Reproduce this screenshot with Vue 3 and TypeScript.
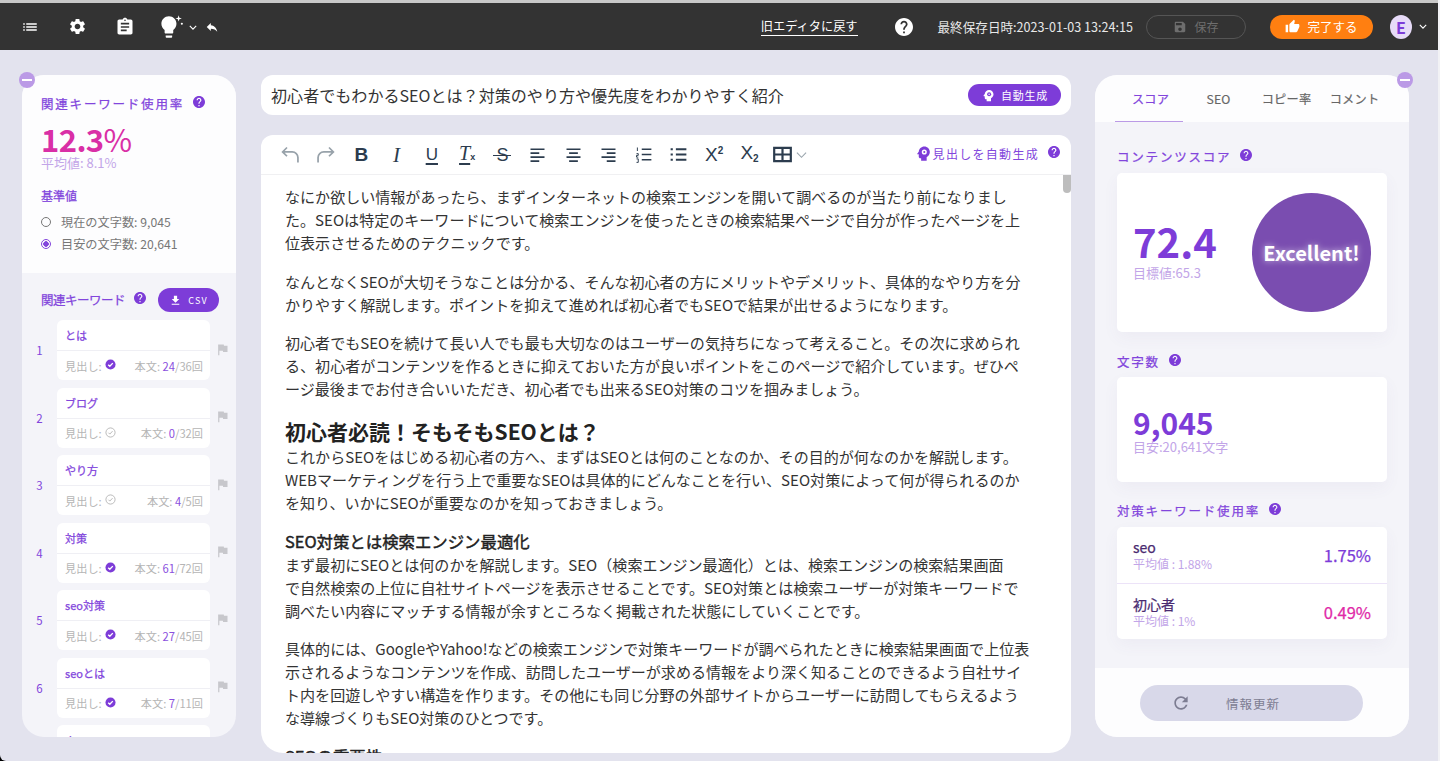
<script setup lang="ts">
const P = {
  list: 'M3 13h2v-2H3v2zm0 4h2v-2H3v2zm0-8h2V7H3v2zm4 4h14v-2H7v2zm0 4h14v-2H7v2zM7 7v2h14V7H7z',
  gear: 'M19.14 12.94c.04-.3.06-.61.06-.94 0-.32-.02-.64-.07-.94l2.03-1.58c.18-.14.23-.41.12-.61l-1.92-3.32c-.12-.22-.37-.29-.59-.22l-2.39.96c-.5-.38-1.03-.7-1.62-.94l-.36-2.54c-.04-.24-.24-.41-.48-.41h-3.84c-.24 0-.43.17-.47.41l-.36 2.54c-.59.24-1.13.57-1.62.94l-2.39-.96c-.22-.08-.47 0-.59.22L2.74 8.87c-.12.21-.08.47.12.61l2.03 1.58c-.05.3-.09.63-.09.94s.02.64.07.94l-2.03 1.58c-.18.14-.23.41-.12.61l1.92 3.32c.12.22.37.29.59.22l2.39-.96c.5.38 1.03.7 1.62.94l.36 2.54c.05.24.24.41.48.41h3.84c.24 0 .44-.17.47-.41l.36-2.54c.59-.24 1.13-.56 1.62-.94l2.39.96c.22.08.47 0 .59-.22l1.92-3.32c.12-.22.07-.47-.12-.61l-2.01-1.58zM12 15.6c-1.98 0-3.6-1.62-3.6-3.6s1.62-3.6 3.6-3.6 3.6 1.62 3.6 3.6-1.62 3.6-3.6 3.6z',
  clip: 'M19 3h-4.18C14.4 1.84 13.3 1 12 1c-1.3 0-2.4.84-2.82 2H5c-1.1 0-2 .9-2 2v14c0 1.1.9 2 2 2h14c1.1 0 2-.9 2-2V5c0-1.1-.9-2-2-2zm-7 0c.55 0 1 .45 1 1s-.45 1-1 1-1-.45-1-1 .45-1 1-1zm2 14H7v-2h7v2zm3-4H7v-2h10v2zm0-4H7V7h10v2z',
  bulb: 'M9 21c0 .55.45 1 1 1h4c.55 0 1-.45 1-1v-1H9v1zm3-19C8.14 2 5 5.14 5 9c0 2.38 1.19 4.47 3 5.74V17c0 .55.45 1 1 1h6c.55 0 1-.45 1-1v-2.26c1.81-1.27 3-3.36 3-5.74 0-3.86-3.14-7-7-7z',
  reply: 'M10 9V5l-7 7 7 7v-4.1c5 0 8.5 1.6 11 5.1-1-5-4-10-11-11z',
  help: 'M12 2C6.48 2 2 6.48 2 12s4.48 10 10 10 10-4.48 10-10S17.52 2 12 2zm1 17h-2v-2h2v2zm2.07-7.75l-.9.92C13.45 12.9 13 13.5 13 15h-2v-.5c0-1.1.45-2.1 1.17-2.83l1.24-1.26c.37-.36.59-.86.59-1.41 0-1.1-.9-2-2-2s-2 .9-2 2H8c0-2.21 1.79-4 4-4s4 1.79 4 4c0 .88-.36 1.68-.93 2.25z',
  save: 'M17 3H5c-1.11 0-2 .9-2 2v14c0 1.1.89 2 2 2h14c1.1 0 2-.9 2-2V7l-4-4zm-5 16c-1.66 0-3-1.34-3-3s1.34-3 3-3 3 1.34 3 3-1.34 3-3 3zm3-10H5V5h10v4z',
  thumb: 'M1 21h4V9H1v12zm22-11c0-1.1-.9-2-2-2h-6.31l.95-4.57.03-.32c0-.41-.17-.79-.44-1.06L14.17 1 7.59 7.59C7.22 7.95 7 8.45 7 9v10c0 1.1.9 2 2 2h9c.83 0 1.54-.5 1.84-1.22l3.02-7.05c.09-.23.14-.47.14-.73v-2z',
  down: 'M19 9h-4V3H9v6H5l7 7 7-7zM5 18v2h14v-2H5z',
  flag: 'M14.4 6L14 4H5v17h2v-7h5.6l.4 2h7V6z',
  refresh: 'M17.65 6.35C16.2 4.9 14.21 4 12 4c-4.42 0-7.99 3.58-7.99 8s3.57 8 7.99 8c3.73 0 6.84-2.55 7.73-6h-2.08c-.82 2.33-3.04 4-5.65 4-3.31 0-6-2.69-6-6s2.69-6 6-6c1.66 0 3.14.69 4.22 1.78L13 11h7V4l-2.35 2.35z',
  head: 'M13 3C9.23 3 6.19 5.95 6 9.66l-1.92 2.53c-.24.31 0 .81.42.81H6v3c0 1.1.9 2 2 2h1v3h7v-4.68c2.36-1.12 4-3.53 4-6.32 0-3.87-3.13-7-7-7z',
}

interface Keyword { name: string; done: boolean; hit: number; max: number }
const keywords: Keyword[] = [
  { name: 'とは', done: true, hit: 24, max: 36 },
  { name: 'ブログ', done: false, hit: 0, max: 32 },
  { name: 'やり方', done: false, hit: 4, max: 5 },
  { name: '対策', done: true, hit: 61, max: 72 },
  { name: 'seo対策', done: true, hit: 27, max: 45 },
  { name: 'seoとは', done: true, hit: 7, max: 11 },
  { name: '人', done: true, hit: 3, max: 9 },
]
const tabs = ['スコア', 'SEO', 'コピー率', 'コメント']
</script>

<template>
  <div class="app">
    <header class="topbar">
      <div class="tools">
        <svg class="ti t1" viewBox="0 0 24 24"><path :d="P.list" /></svg>
        <svg class="ti t2" viewBox="0 0 24 24"><path :d="P.gear" /></svg>
        <svg class="ti t3" viewBox="0 0 24 24"><path :d="P.clip" /></svg>
        <svg class="bulb" viewBox="0 0 26 24">
          <path :d="P.bulb" />
          <path d="M21 1l.7 2.3L24 4l-2.3.7L21 7l-.7-2.3L18 4l2.3-.7z" />
          <circle cx="24" cy="9" r="1" />
        </svg>
        <svg class="chev" viewBox="0 0 10 6"><path d="M1 1l4 4 4-4" /></svg>
        <svg class="reply" viewBox="0 0 24 24"><path :d="P.reply" /></svg>
      </div>
      <div class="status">
        <a class="legacy">旧エディタに戻す</a>
        <svg class="qhelp" viewBox="2 2 20 20"><path :d="P.help" /></svg>
        <span class="saved">最終保存日時:2023-01-03 13:24:15</span>
        <button class="savebtn">
          <svg viewBox="0 0 24 24"><path :d="P.save" /></svg>保存
        </button>
        <button class="donebtn">
          <svg viewBox="0 0 24 24"><path :d="P.thumb" /></svg>完了する
        </button>
        <span class="avatar">E</span>
        <svg class="chev" viewBox="0 0 10 6"><path d="M1 1l4 4 4-4" /></svg>
      </div>
    </header>

    <main class="stage">
      <aside class="left panel">
        <span class="minus minus-l"></span>
        <section class="usage">
          <h3 class="h wide">関連キーワード使用率<svg class="hi" viewBox="2 2 20 20"><path :d="P.help" /></svg></h3>
          <div class="rate">12.3<span>%</span></div>
          <div class="avg">平均値: 8.1%</div>
          <h4 class="base">基準値</h4>
          <label class="radio"><i></i>現在の文字数: 9,045</label>
          <label class="radio on"><i></i>目安の文字数: 20,641</label>
        </section>
        <section class="kw">
          <div class="kwhead">
            <h3 class="h">関連キーワード</h3>
            <svg class="hi" viewBox="2 2 20 20"><path :d="P.help" /></svg>
            <button class="csv"><svg viewBox="0 0 24 24"><path :d="P.down" /></svg>CSV</button>
          </div>
          <div v-for="(k, i) in keywords" :key="k.name" class="kwrow">
            <span class="num">{{ i + 1 }}</span>
            <div class="kwcard">
              <div class="kwname">{{ k.name }}</div>
              <div class="kwmeta">
                <span class="mh">見出し:
                  <svg v-if="k.done" viewBox="0 0 24 24"><circle cx="12" cy="12" r="11" fill="#7d3cd8" /><path d="M7 12.5l3.5 3.5L17 9" fill="none" stroke="#fff" stroke-width="3" /></svg>
                  <svg v-else viewBox="0 0 24 24"><circle cx="12" cy="12" r="10" fill="none" stroke="#b5b5b5" stroke-width="2" /><path d="M7.5 12.5l3 3L16.5 9" fill="none" stroke="#b5b5b5" stroke-width="2" /></svg>
                </span>
                <span class="mb">本文: <b>{{ k.hit }}</b>/{{ k.max }}回</span>
              </div>
            </div>
            <svg class="flag" viewBox="0 0 24 24"><path :d="P.flag" /></svg>
          </div>
        </section>
      </aside>

      <div class="center">
        <div class="titlecard">
          <span class="title">初心者でもわかるSEOとは？対策のやり方や優先度をわかりやすく紹介</span>
          <button class="auto">
            <svg viewBox="0 0 24 24"><path :d="P.head" /><circle cx="13" cy="10" r="3.2" fill="#7d3cd8" /><circle cx="13" cy="10" r="1.2" /></svg>自動生成
          </button>
        </div>
        <div class="editor">
          <div class="toolbar">
            <div class="tb mute">
              <svg viewBox="0 0 24 24"><path d="M8 4L3 9l5 5M3.500 9H14a6.500 6.500 0 0 1 6.500 6.500V21" /></svg>
            </div>
            <div class="tb mute">
              <svg viewBox="0 0 24 24"><path d="M16 4l5 5-5 5M20.500 9H10a6.500 6.500 0 0 0-6.500 6.500V21" /></svg>
            </div>
            <div class="tb"><span class="g gb">B</span></div>
            <div class="tb"><span class="g gi">I</span></div>
            <div class="tb"><span class="g gu">U</span></div>
            <div class="tb"><span class="g gt"><u>T</u><small>x</small></span></div>
            <div class="tb"><span class="g gs">S</span></div>
            <div class="tb"><svg viewBox="0 0 24 24"><path d="M4 6h16M4 10.500h10M4 15h16M4 19.500h10" /></svg></div>
            <div class="tb"><svg viewBox="0 0 24 24"><path d="M4 6h16M7 10.500h10M4 15h16M7 19.500h10" /></svg></div>
            <div class="tb"><svg viewBox="0 0 24 24"><path d="M4 6h16M10 10.500h10M4 15h16M10 19.500h10" /></svg></div>
            <div class="tb"><svg viewBox="0 0 24 24"><path d="M10 6h11M10 12h11M10 18h11" /><path d="M5 4v4M4 11h2v2H4v2h2M4 17h2v4H4" stroke-width="1.100" /></svg></div>
            <div class="tb"><svg viewBox="0 0 24 24"><path d="M9 6h12M9 12h12M9 18h12M3 6h2.500M3 12h2.500M3 18h2.500" stroke-width="2.200" /></svg></div>
            <div class="tb"><span class="g gx">X<sup>2</sup></span></div>
            <div class="tb"><span class="g gx gsub">X<sub>2</sub></span></div>
            <div class="tb table">
              <svg viewBox="0 0 24 24"><path d="M2.500 4.500h19v15h-19zM2.500 12h19M12 4.500v15" stroke-width="2.500" /></svg>
              <svg class="tchev" viewBox="0 0 12 8"><path d="M1 1.500l5 5 5-5" /></svg>
            </div>
            <div class="gen">
              <svg viewBox="0 0 24 24"><path :d="P.head" /><circle cx="13" cy="10" r="3.200" fill="#fff" /><circle cx="13" cy="10" r="1.300" /></svg>
              <span>見出しを自動生成</span>
              <svg class="hi" viewBox="2 2 20 20"><path :d="P.help" /></svg>
            </div>
          </div>
          <div class="doc">
            <i class="thumb"></i>
            <p>なにか欲しい情報があったら、まずインターネットの検索エンジンを開いて調べるのが当たり前になりました。SEOは特定のキーワードについて検索エンジンを使ったときの検索結果ページで自分が作ったページを上位表示させるためのテクニックです。</p>
            <p>なんとなくSEOが大切そうなことは分かる、そんな初心者の方にメリットやデメリット、具体的なやり方を分かりやすく解説します。ポイントを抑えて進めれば初心者でもSEOで結果が出せるようになります。</p>
            <p>初心者でもSEOを続けて長い人でも最も大切なのはユーザーの気持ちになって考えること。その次に求められる、初心者がコンテンツを作るときに抑えておいた方が良いポイントをこのページで紹介しています。ぜひページ最後までお付き合いいただき、初心者でも出来るSEO対策のコツを掴みましょう。</p>
            <h2>初心者必読！そもそもSEOとは？</h2>
            <p>これからSEOをはじめる初心者の方へ、まずはSEOとは何のことなのか、その目的が何なのかを解説します。WEBマーケティングを行う上で重要なSEOは具体的にどんなことを行い、SEO対策によって何が得られるのかを知り、いかにSEOが重要なのかを知っておきましょう。</p>
            <h5>SEO対策とは検索エンジン最適化</h5>
            <p>まず最初にSEOとは何のかを解説します。SEO（検索エンジン最適化）とは、検索エンジンの検索結果画面<br />で自然検索の上位に自社サイトページを表示させることです。SEO対策とは検索ユーザーが対策キーワードで調べたい内容にマッチする情報が余すところなく掲載された状態にしていくことです。</p>
            <p>具体的には、GoogleやYahoo!などの検索エンジンで対策キーワードが調べられたときに検索結果画面で上位表示されるようなコンテンツを作成、訪問したユーザーが求める情報をより深く知ることのできるよう自社サイト内を回遊しやすい構造を作ります。その他にも同じ分野の外部サイトからユーザーに訪問してもらえるような導線づくりもSEO対策のひとつです。</p>
            <h5>SEOの重要性</h5>
          </div>
        </div>
      </div>

      <aside class="right panel">
        <span class="minus minus-r"></span>
        <nav class="tabs">
          <span v-for="(t, i) in tabs" :key="t" class="tab" :class="{ active: i === 0 }">{{ t }}</span>
        </nav>
        <section class="scores">
          <h3 class="h wide">コンテンツスコア<svg class="hi" viewBox="2 2 20 20"><path :d="P.help" /></svg></h3>
          <div class="card scorecard">
            <div class="scorebox">
              <div class="big">72.4</div>
              <div class="sub">目標値:65.3</div>
            </div>
            <div class="orb">Excellent!</div>
          </div>
          <h3 class="h wide next tight">文字数<svg class="hi" viewBox="2 2 20 20"><path :d="P.help" /></svg></h3>
          <div class="card countcard">
            <div class="big small">9,045</div>
            <div class="sub">目安:20,641文字</div>
          </div>
          <h3 class="h wide next third">対策キーワード使用率<svg class="hi" viewBox="2 2 20 20"><path :d="P.help" /></svg></h3>
          <div class="card target">
            <div class="trow">
              <div><div class="tname">seo</div><div class="tavg">平均値 : 1.88%</div></div>
              <div class="tval">1.75%</div>
            </div>
            <div class="trow">
              <div><div class="tname">初心者</div><div class="tavg">平均値 : 1%</div></div>
              <div class="tval pink">0.49%</div>
            </div>
          </div>
        </section>
        <footer class="foot">
          <button class="update">
            <svg viewBox="0 0 24 24"><path :d="P.refresh" /></svg>
            <span>情報更新</span>
          </button>
        </footer>
      </aside>
    </main>
  </div>
</template>

<style>
html, body { margin: 0; background: #000; }
</style>

<style scoped>
* { box-sizing: border-box; }
.app {
  width: 1440px; height: 761px; overflow: hidden; display: flex; flex-direction: column;
  background: #e3e3ee; border-bottom-left-radius: 6px;
  font-family: "Noto Sans CJK JP", "Noto Sans", sans-serif; color: #333;
  border-right: 2px solid #f2f2f5;
}
h2, h3, h4, h5, p { margin: 0; }
button { font-family: inherit; border: 0; padding: 0; }

.topbar {
  height: 50px; flex: none; display: flex; justify-content: space-between; align-items: center;
  background: #333; border-top: 3px solid #c8c8c8; padding-right: 11px;
}
.tools { display: flex; align-items: center; padding-left: 21px; fill: #fff; }
.ti { width: 18px; height: 18px; fill: #fff; }
.t2 { margin-left: 29px; width: 19px; height: 19px; }
.t3 { margin-left: 28px; width: 20px; height: 20px; }
.bulb { margin-left: 21px; width: 28px; height: 26px; fill: #fff; }
.chev { width: 8px; height: 5px; fill: none; stroke: #fff; stroke-width: 1.4; }
.tools .chev { margin-left: 5px; margin-top: 1px; }
.reply { width: 14px; height: 14px; margin-left: 8px; fill: #fff; }
.status { display: flex; align-items: center; color: #fff; }
.legacy { font-size: 12.2px; line-height: 16px; border-bottom: 1px solid #fff; padding-bottom: 1px; margin-top: 1px; }
.qhelp { width: 18px; height: 18px; fill: #fff; margin-left: 37px; }
.saved { font-size: 12.6px; margin-left: 25px; color: #e8e8e8; }
.savebtn {
  width: 100px; height: 24px; margin-left: 13px; border: 1px solid #555; border-radius: 12px; background: transparent;
  display: flex; align-items: center; justify-content: center; gap: 7px; color: #6e6e6e; font-size: 12px;
}
.savebtn svg { width: 14px; height: 14px; fill: #6e6e6e; }
.donebtn {
  width: 103px; height: 24px; margin-left: 24px; border-radius: 12px; background: #ff7f11; color: #fff;
  display: flex; align-items: center; justify-content: center; gap: 7px; font-size: 12.5px;
}
.donebtn svg { width: 15px; height: 15px; fill: #fff; }
.avatar {
  width: 22px; height: 24px; margin-left: 17px; border-radius: 50%; background: #e7dbf8; color: #7d3cd8;
  font-size: 16px; font-weight: 700; display: flex; align-items: center; justify-content: center;
}
.status .chev { margin-left: 7px; }

.stage { flex: 1; min-height: 0; display: flex; align-items: flex-start; padding: 25px 0 0 22px; }
.panel { position: relative; width: 214px; height: 662px; background: #f4f4f9; border-radius: 22px; flex: none; }
.minus { position: absolute; top: -3px; width: 16px; height: 16px; border-radius: 50%; background: #bb9ae6; z-index: 2; }
.minus::after { content: ""; position: absolute; left: 3px; right: 3px; top: 7px; height: 2px; background: #fff; }
.minus-l { left: -3px; }
.minus-r { right: -4px; }

.h { font-size: 12.5px; font-weight: 400; -webkit-text-stroke: .25px currentColor; color: #8245dc; line-height: 18px; display: flex; align-items: center; }
.h.wide { letter-spacing: 1.8px; }
.hi { width: 12px; height: 12px; fill: #7d3cd8; flex: none; margin-top: -4px; }
.h .hi { margin-left: 9px; }

.left { display: flex; flex-direction: column; }
.usage { height: 198px; background: #fdfdfe; border-radius: 22px 22px 0 0; padding: 20px 19px 0; flex: none; }
.rate { font-size: 31px; line-height: 38px; margin-top: 7px; color: #d92fa6; font-weight: 700; letter-spacing: -.6px; }
.rate span { font-weight: 400; }
.avg { font-size: 13px; line-height: 16px; color: #c2a5e8; margin-top: -3px; }
.base { font-size: 12px; font-weight: 400; -webkit-text-stroke: .25px currentColor; color: #8245dc; line-height: 18px; margin-top: 16px; }
.radio { display: flex; align-items: center; gap: 10px; font-size: 12.2px; line-height: 18px; color: #777; margin-top: 4px; }
.base + .radio { margin-top: 8px; }
.radio i { width: 10px; height: 10px; border: 1px solid #777; border-radius: 50%; flex: none; }
.radio.on i { border-color: #8245dc; background: radial-gradient(circle, #8245dc 0 2.5px, #fff 3px); }

.kw { flex: 1; min-height: 0; overflow: hidden; border-radius: 0 0 22px 22px; padding: 15px 0 0 0; }
.kwhead { display: flex; align-items: center; padding-left: 19px; height: 24px; margin-bottom: 8px; }
.kwhead .h { letter-spacing: -.5px; }
.kwhead .hi { margin-left: 9px; }
.csv {
  width: 61px; height: 24px; margin-left: 12px; border-radius: 12px; background: #7d3cd8; color: #fff;
  display: flex; align-items: center; justify-content: center; gap: 6px; font-size: 9px; letter-spacing: 1.2px;
}
.csv svg { width: 13px; height: 13px; fill: #fff; }
.kwrow { display: flex; align-items: center; height: 60px; margin-bottom: 7.5px; }
.num { width: 35px; text-align: center; font-size: 11.5px; color: #8245dc; }
.kwcard { width: 153px; height: 60px; background: #fff; border-radius: 6px; }
.kwname { height: 31px; padding: 6px 9px 0 8px; font-size: 11px; line-height: 18px; -webkit-text-stroke: .25px currentColor; color: #8245dc; border-bottom: 1px solid #efeff4; }
.kwmeta { display: flex; justify-content: space-between; align-items: center; height: 29px; padding: 0 7px 0 8px; font-size: 11.2px; color: #b5b5b5; }
.mh { display: flex; align-items: center; gap: 3px; }
.mh svg { width: 11px; height: 11px; margin-top: -2px; }
.mb b { font-weight: 400; color: #8a50de; }
.flag { width: 15px; height: 15px; fill: #c7c7cc; margin-left: 5px; margin-top: -2px; }

.center { width: 810px; margin-left: 25px; flex: none; display: flex; flex-direction: column; gap: 20px; }
.titlecard { height: 40px; background: #fff; border-radius: 12px; display: flex; align-items: center; justify-content: space-between; padding: 0 10px; }
.title { font-size: 16.07px; color: #333; }
.auto {
  width: 93px; height: 22px; border-radius: 11px; background: #7d3cd8; color: #fff; font-size: 11px; letter-spacing: .8px;
  display: flex; align-items: center; justify-content: center; gap: 5px;
}
.auto svg { width: 15px; height: 15px; fill: #fff; }
.editor { height: 618px; background: #fff; border-radius: 12px 12px 22px 22px; overflow: hidden; display: flex; flex-direction: column; }
.toolbar { height: 40px; flex: none; display: flex; align-items: center; padding-left: 12px; border-bottom: 1px solid #f0f0f2; }
.tb { width: 35.3px; height: 22px; flex: none; display: flex; align-items: center; justify-content: center; color: #2c3c4e; }
.tb svg { width: 21px; height: 21px; fill: none; stroke: #2c3c4e; stroke-width: 1.9; }
.tb.mute svg { stroke: #98a2aa; stroke-width: 2; }
.g { font-family: "Liberation Sans", sans-serif; font-size: 18px; line-height: 20px; position: relative; }
.gb { font-weight: 700; font-size: 19px; }
.gi { font-family: "Liberation Serif", serif; font-style: italic; font-size: 21px; }
.gu { font-size: 17px; text-decoration: underline; text-underline-offset: 3px; text-decoration-thickness: 2px; }
.gt { font-family: "Liberation Serif", serif; font-style: italic; font-size: 20px; }
.gt u { text-underline-offset: 3px; text-decoration-thickness: 2px; }
.gt small { font-family: "Liberation Sans", sans-serif; font-style: normal; font-weight: 700; font-size: 9px; }
.gs::after { content: ""; position: absolute; left: -3px; right: -3px; top: 10px; height: 1.5px; background: #2c3c4e; }
.gx { font-size: 19px; line-height: 20px; }
.gx sup { font-size: 10px; font-weight: 700; line-height: 0; vertical-align: 7px; }
.gsub { margin-top: -4px; }
.gx sub { font-size: 10px; font-weight: 700; line-height: 0; vertical-align: -3px; }
.table { width: 30px; justify-content: flex-start; margin-left: 5px; }
.table svg:first-child { flex: none; }
.table .tchev { width: 11px; height: 8px; flex: none; stroke: #9aa5ad; stroke-width: 1.2; margin-left: 3px; }
.gen { margin-left: auto; margin-right: 11px; display: flex; align-items: center; color: #8245dc; font-size: 12px; letter-spacing: 1.3px; margin-top: -2px; }
.gen > svg:first-child { width: 19px; height: 19px; fill: #7d3cd8; margin-right: 0; }
.gen .hi { margin-left: 9px; }

.doc { position: relative; flex: 1; min-height: 0; overflow: hidden; padding: 10px 39px 0 24px; font-size: 15.05px; line-height: 23px; color: #333; }
.doc p { margin-bottom: 15.5px; }
.doc h2 { font-size: 21px; line-height: 30px; font-weight: 700; margin-top: 15px; color: #222; margin-bottom: -1px; }
.doc h5 { font-size: 16.4px; line-height: 23px; font-weight: 400; -webkit-text-stroke: .45px currentColor; color: #222; margin-top: 16px; }
.doc h2 + p { margin-bottom: 16px; }
.thumb { position: absolute; right: 0; top: 0; width: 8px; height: 18px; background: #bdbdbd; border-radius: 0 0 4px 4px; }

.right { width: 314px; margin-left: 24px; display: flex; flex-direction: column; }
.tabs { height: 47px; flex: none; background: #fdfdfe; border-radius: 22px 22px 0 0; display: flex; padding: 0 20px; }
.tab { width: 68px; text-align: center; padding-left: 3px; font-size: 12.2px; -webkit-text-stroke: .2px currentColor; line-height: 48px; color: #666; letter-spacing: .2px; }
.tab.active { color: #8245dc; border-bottom: 1px solid #bb9ae6; height: 47px; }
.scores { flex: 1; min-height: 0; padding: 26px 22px 0; }
.card { background: #fff; border-radius: 5px; box-shadow: 0 6px 16px rgba(90, 70, 140, .05); }
.scores .h { margin-bottom: 7px; }
.next { margin-top: 21px; }
.scores .tight { margin-bottom: 6px; }
.third { margin-top: 20px; }
.scorecard { height: 159px; display: flex; align-items: center; justify-content: space-between; padding: 0 16px 0 16px; }
.scorebox { padding-bottom: 6px; }
.big { font-size: 40px; line-height: 44px; font-weight: 700; color: #7d3cd8; }
.big.small { font-size: 30px; line-height: 38px; }
.sub { font-size: 13px; line-height: 16px; color: #c2a5e8; margin-top: 2px; }
.orb {
  width: 119px; height: 119px; border-radius: 50%; background: #7a4db0; color: #fff; font-size: 20px; font-weight: 700;
  display: flex; align-items: center; justify-content: center; text-shadow: 0 0 6px rgba(255, 255, 255, .7);
}
.countcard { height: 105px; padding: 26px 16px 0; }
.countcard .sub { margin-top: -2px; }
.target { height: 112px; }
.trow { height: 56px; display: flex; align-items: center; justify-content: space-between; padding: 0 16px; }
.trow + .trow { border-top: 1px solid #ece3f8; }
.tname { font-size: 14px; line-height: 17px; -webkit-text-stroke: .25px currentColor; color: #4a2a70; }
.tavg { font-size: 12px; line-height: 15px; color: #c2a5e8; }
.tval { font-size: 16.5px; -webkit-text-stroke: .25px currentColor; color: #7d3cd8; }
.tval.pink { color: #e02aa8; }
.foot { height: 69px; flex: none; background: #fdfdfe; border-radius: 0 0 22px 22px; padding: 17px 0 0 45px; }
.update { width: 223px; height: 36px; border-radius: 18px; background: #d8d8e9; display: flex; align-items: center; color: #7d7d92; font-size: 12.5px; letter-spacing: 1px; padding-left: 31px; }
.update svg { width: 20px; height: 20px; fill: #7d7d92; }
.update span { margin-left: 35px; }
</style>
